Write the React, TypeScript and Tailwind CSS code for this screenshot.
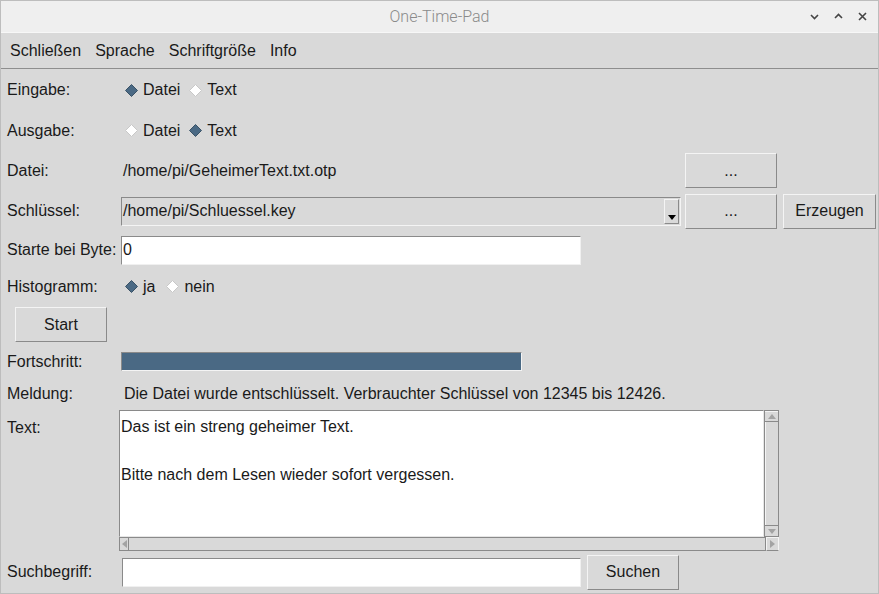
import React from "react";

const font = { fontFamily: '"Liberation Sans", Arial, sans-serif' };

function Diamond({ on }: { on: boolean }) {
  return (
    <svg width="13" height="13" viewBox="0 0 13 13" className="shrink-0">
      <polygon
        points="6.5,0.5 12.5,6.5 6.5,12.5 0.5,6.5"
        fill={on ? "#4a6984" : "#ffffff"}
        stroke={on ? "#3a5266" : "#c8c8c8"}
        strokeWidth="1"
      />
    </svg>
  );
}

function Radio({ on, label }: { on: boolean; label: string }) {
  return (
    <span className="flex items-center gap-[5px] mr-[9px]">
      <Diamond on={on} />
      <span>{label}</span>
    </span>
  );
}

function Button({ label, className }: { label: string; className: string }) {
  return (
    <div
      className={`flex items-center justify-center bg-[#d9d9d9] border border-t-[#f4f4f4] border-l-[#f4f4f4] border-b-[#8a8a8a] border-r-[#8a8a8a] ${className}`}
    >
      {label}
    </div>
  );
}

function Entry({ value, className }: { value: string; className: string }) {
  return (
    <div
      className={`flex items-center px-[1px] bg-white border border-t-[#8a8a8a] border-l-[#8a8a8a] border-b-[#f0f0f0] border-r-[#f0f0f0] ${className}`}
    >
      {value}
    </div>
  );
}

function Row({ label, h, children }: { label: string; h: string; children?: React.ReactNode }) {
  return (
    <div className={`flex items-center ${h}`}>
      <div className="w-[114px] shrink-0 pl-[6px] whitespace-nowrap">{label}</div>
      {children}
    </div>
  );
}

function Arrow({ dir }: { dir: "up" | "down" | "left" | "right" }) {
  const pts =
    dir === "up"
      ? "1,6 9,6 5,1"
      : dir === "down"
      ? "1,1 9,1 5,6"
      : dir === "left"
      ? "6,1 6,9 1,5"
      : "1,1 1,9 6,5";
  const w = dir === "up" || dir === "down" ? 10 : 7;
  const h = dir === "up" || dir === "down" ? 7 : 10;
  return (
    <svg width={w} height={h} viewBox={`0 0 ${w} ${h}`}>
      <polygon points={pts} fill="#a3a3a3" />
    </svg>
  );
}

export default function App() {
  return (
    <div
      className="w-[879px] h-[594px] overflow-hidden bg-[#d9d9d9] text-[16px] text-[#1a1a1a] border border-[#bdbdbd] flex flex-col"
      style={font}
    >
      {/* Title bar */}
      <div className="h-[31px] shrink-0 bg-[#efefef] relative flex items-center justify-center">
        <span className="text-[#8a8a8a] text-[16px]" style={{ fontFamily: 'Roboto, "Liberation Sans", sans-serif', fontWeight: 300 }}>
          One-Time-Pad
        </span>
        <div className="absolute right-[10px] top-0 h-full flex items-center gap-[13px] text-[#333]">
          <svg width="11" height="11" viewBox="0 0 11 11">
            <polyline points="2,4 5.5,7.5 9,4" fill="none" stroke="#444" strokeWidth="1.6" />
          </svg>
          <svg width="11" height="11" viewBox="0 0 11 11">
            <polyline points="2,7 5.5,3.5 9,7" fill="none" stroke="#444" strokeWidth="1.6" />
          </svg>
          <svg width="11" height="11" viewBox="0 0 11 11">
            <path d="M2,2 L9,9 M9,2 L2,9" stroke="#444" strokeWidth="1.6" />
          </svg>
        </div>
      </div>

      {/* Menu bar */}
      <div className="h-[37px] shrink-0 flex items-center gap-[14px] pl-[9px] border-t border-t-[#f7f7f7] border-b border-b-[#8e8e8e]">
        <span>Schließen</span>
        <span>Sprache</span>
        <span>Schriftgröße</span>
        <span>Info</span>
      </div>

      <div className="flex flex-col">
        <Row label="Eingabe:" h="h-[42px]">
          <div className="flex items-center pl-[10px]">
            <Radio on label="Datei" />
            <Radio on={false} label="Text" />
          </div>
        </Row>
        <Row label="Ausgabe:" h="h-[39px]">
          <div className="flex items-center pl-[10px]">
            <Radio on={false} label="Datei" />
            <Radio on label="Text" />
          </div>
        </Row>
        <Row label="Datei:" h="h-[41px]">
          <span className="pl-[8px] w-[570px]">/home/pi/GeheimerText.txt.otp</span>
          <Button label="..." className="w-[92px] h-[35px]" />
        </Row>
        <Row label="Schlüssel:" h="h-[40px]">
          <div className="w-[560px] h-[29px] ml-[6px] flex bg-[#d9d9d9] border border-t-[#8a8a8a] border-l-[#8a8a8a] border-b-[#f4f4f4] border-r-[#f4f4f4]">
            <span className="flex-1 pl-[1px] flex items-center">/home/pi/Schluessel.key</span>
            <div className="w-[15px] my-[1px] mr-[1px] flex items-end justify-center pb-[3px] border border-t-[#f4f4f4] border-l-[#f4f4f4] border-b-[#8a8a8a] border-r-[#8a8a8a]">
              <svg width="8" height="5" viewBox="0 0 8 5">
                <polygon points="0,0 8,0 4,5" fill="#000" />
              </svg>
            </div>
          </div>
          <Button label="..." className="w-[92px] h-[35px] ml-[4px]" />
          <Button label="Erzeugen" className="w-[93px] h-[35px] ml-[6px]" />
        </Row>
        <Row label="Starte bei Byte:" h="h-[38px]">
          <Entry value="0" className="w-[460px] h-[29px] ml-[6px]" />
        </Row>
        <Row label="Histogramm:" h="h-[35px]">
          <div className="flex items-center pl-[10px]">
            <span className="flex items-center gap-[5px] mr-[11px]">
              <Diamond on />
              <span>ja</span>
            </span>
            <Radio on={false} label="nein" />
          </div>
        </Row>
        <div className="h-[41px] flex items-center pl-[14px]">
          <Button label="Start" className="w-[92px] h-[35px]" />
        </div>
        <Row label="Fortschritt:" h="h-[33px]">
          <div className="w-[401px] h-[19px] ml-[6px] bg-[#4a6984] border border-t-[#8a8a8a] border-l-[#8a8a8a] border-b-[#f4f4f4] border-r-[#f4f4f4]" />
        </Row>
        <Row label="Meldung:" h="h-[32px]">
          <span className="pl-[9px] whitespace-nowrap">
            Die Datei wurde entschlüsselt. Verbrauchter Schlüssel von 12345 bis 12426.
          </span>
        </Row>

        {/* Text area */}
        <div className="flex h-[142px]">
          <div className="w-[118px] shrink-0 pl-[6px] pt-[6px]">Text:</div>
          <div className="flex flex-col w-[660px]">
            <div className="flex h-[127px]">
              <div className="flex-1 bg-white border border-t-[#8a8a8a] border-l-[#8a8a8a] border-b-[#e6e6e6] border-r-[#e6e6e6] pl-[1px] pt-[4px] leading-[24px]">
                <div>Das ist ein streng geheimer Text.</div>
                <div>&nbsp;</div>
                <div>Bitte nach dem Lesen wieder sofort vergessen.</div>
              </div>
              <div className="w-[15px] flex flex-col bg-[#d9d9d9] border border-[#8a8a8a]">
                <div className="h-[11px] flex items-center justify-center border-b border-b-[#8a8a8a] border-t border-t-[#f4f4f4]">
                  <Arrow dir="up" />
                </div>
                <div className="flex-1 border-l border-l-[#f4f4f4]" />
                <div className="h-[11px] flex items-center justify-center border-t border-t-[#8a8a8a]">
                  <Arrow dir="down" />
                </div>
              </div>
            </div>
            <div className="flex h-[14px]">
              <div className="flex-1 flex bg-[#d9d9d9] border border-[#8a8a8a]">
                <div className="w-[9px] flex items-center justify-center border-r border-r-[#8a8a8a]">
                  <Arrow dir="left" />
                </div>
                <div className="flex-1" />
              </div>
              <div className="w-[13px] flex items-center justify-center border border-t-[#f4f4f4] border-l-[#f4f4f4] border-b-[#8a8a8a] border-r-[#f4f4f4]">
                <Arrow dir="right" />
              </div>
            </div>
          </div>
        </div>

        <Row label="Suchbegriff:" h="h-[40px]">
          <Entry value="" className="w-[459px] h-[29px] ml-[7px]" />
          <Button label="Suchen" className="w-[92px] h-[35px] ml-[6px]" />
        </Row>
      </div>
    </div>
  );
}
